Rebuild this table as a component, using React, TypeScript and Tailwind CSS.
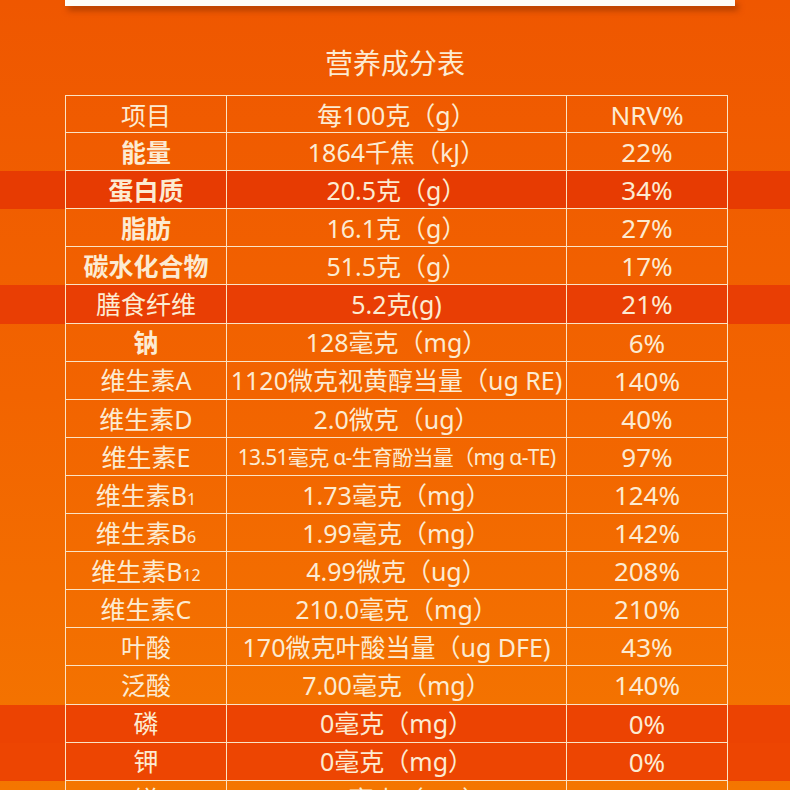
import React from "react";

type Row = {
  name: string;
  sub?: string;
  bold?: boolean;
  value: string;
  nrv: string;
  band?: string;
  small?: boolean;
};

const rows: Row[] = [
  { name: "能量", bold: true, value: "1864千焦（kJ）", nrv: "22%" },
  { name: "蛋白质", bold: true, value: "20.5克（g）", nrv: "34%", band: "bg-[#e73b02]" },
  { name: "脂肪", bold: true, value: "16.1克（g）", nrv: "27%" },
  { name: "碳水化合物", bold: true, value: "51.5克（g）", nrv: "17%" },
  { name: "膳食纤维", value: "5.2克(g)", nrv: "21%", band: "bg-[#e93e04]" },
  { name: "钠", bold: true, value: "128毫克（mg）", nrv: "6%" },
  { name: "维生素A", value: "1120微克视黄醇当量（ug RE)", nrv: "140%" },
  { name: "维生素D", value: "2.0微克（ug）", nrv: "40%" },
  { name: "维生素E", value: "13.51毫克 α-生育酚当量（mg α-TE)", nrv: "97%", small: true },
  { name: "维生素B", sub: "1", value: "1.73毫克（mg）", nrv: "124%" },
  { name: "维生素B", sub: "6", value: "1.99毫克（mg）", nrv: "142%" },
  { name: "维生素B", sub: "12", value: "4.99微克（ug）", nrv: "208%" },
  { name: "维生素C", value: "210.0毫克（mg）", nrv: "210%" },
  { name: "叶酸", value: "170微克叶酸当量（ug DFE)", nrv: "43%" },
  { name: "泛酸", value: "7.00毫克（mg）", nrv: "140%" },
  { name: "磷", value: "0毫克（mg）", nrv: "0%", band: "bg-[#ec4302]" },
  { name: "钾", value: "0毫克（mg）", nrv: "0%", band: "bg-[#ed4502]" },
  { name: "镁", value: "144毫克（mg）", nrv: "40%" },
];

const font = { fontFamily: '"Noto Sans", "Noto Sans CJK SC", sans-serif' };

function TableRow({ r }: { r: Row }) {
  return (
    <div className={`w-full ${r.band ?? ""}`}>
      <div className="ml-[65px] grid h-[38.1px] w-[663px] grid-cols-[162px_340px_161px] border-b-[1.5px] border-[#fbe3c4] box-border">
        <div
          className={`flex items-center justify-center border-x-[1.5px] border-[#fbe3c4] text-[25px] ${
            r.bold ? "font-bold" : "font-normal"
          }`}
        >
          <span>
            {r.name}
            {r.sub && <span className="text-[16px]">{r.sub}</span>}
          </span>
        </div>
        <div
          className={`flex items-center justify-center whitespace-nowrap border-r-[1.5px] border-[#fbe3c4] ${
            r.small ? "text-[21px] tracking-[-0.7px]" : "text-[25px]"
          }`}
        >
          {r.value}
        </div>
        <div className="flex items-center justify-center border-r-[1.5px] border-[#fbe3c4] text-[26px]">
          {r.nrv}
        </div>
      </div>
    </div>
  );
}

export default function App() {
  return (
    <div
      className="relative h-[790px] w-[790px] overflow-hidden bg-gradient-to-b from-[#ef5700] via-[#f26400] to-[#f47600] text-[#fcebd2]"
      style={font}
    >
      <div className="ml-[65px] h-[6px] w-[670px] bg-[#fdfcf8] shadow-[3px_4px_6px_rgba(110,35,0,0.55)]" />
      <div className="flex h-[34px] items-center justify-center mt-[40px] text-[28px] leading-[34px]">
        营养成分表
      </div>
      <div className="mt-[15px]">
        <div className="w-full">
          <div className="ml-[65px] grid h-[38.1px] w-[663px] grid-cols-[162px_340px_161px] border-y-[1.5px] border-[#fbe3c4] box-border">
            <div className="flex items-center justify-center border-x-[1.5px] border-[#fbe3c4] text-[25px]">
              项目
            </div>
            <div className="flex items-center justify-center border-r-[1.5px] border-[#fbe3c4] text-[25px]">
              每100克（g）
            </div>
            <div className="flex items-center justify-center border-r-[1.5px] border-[#fbe3c4] text-[26px]">
              NRV%
            </div>
          </div>
        </div>
        {rows.map((r, i) => (
          <TableRow key={i} r={r} />
        ))}
      </div>
    </div>
  );
}
